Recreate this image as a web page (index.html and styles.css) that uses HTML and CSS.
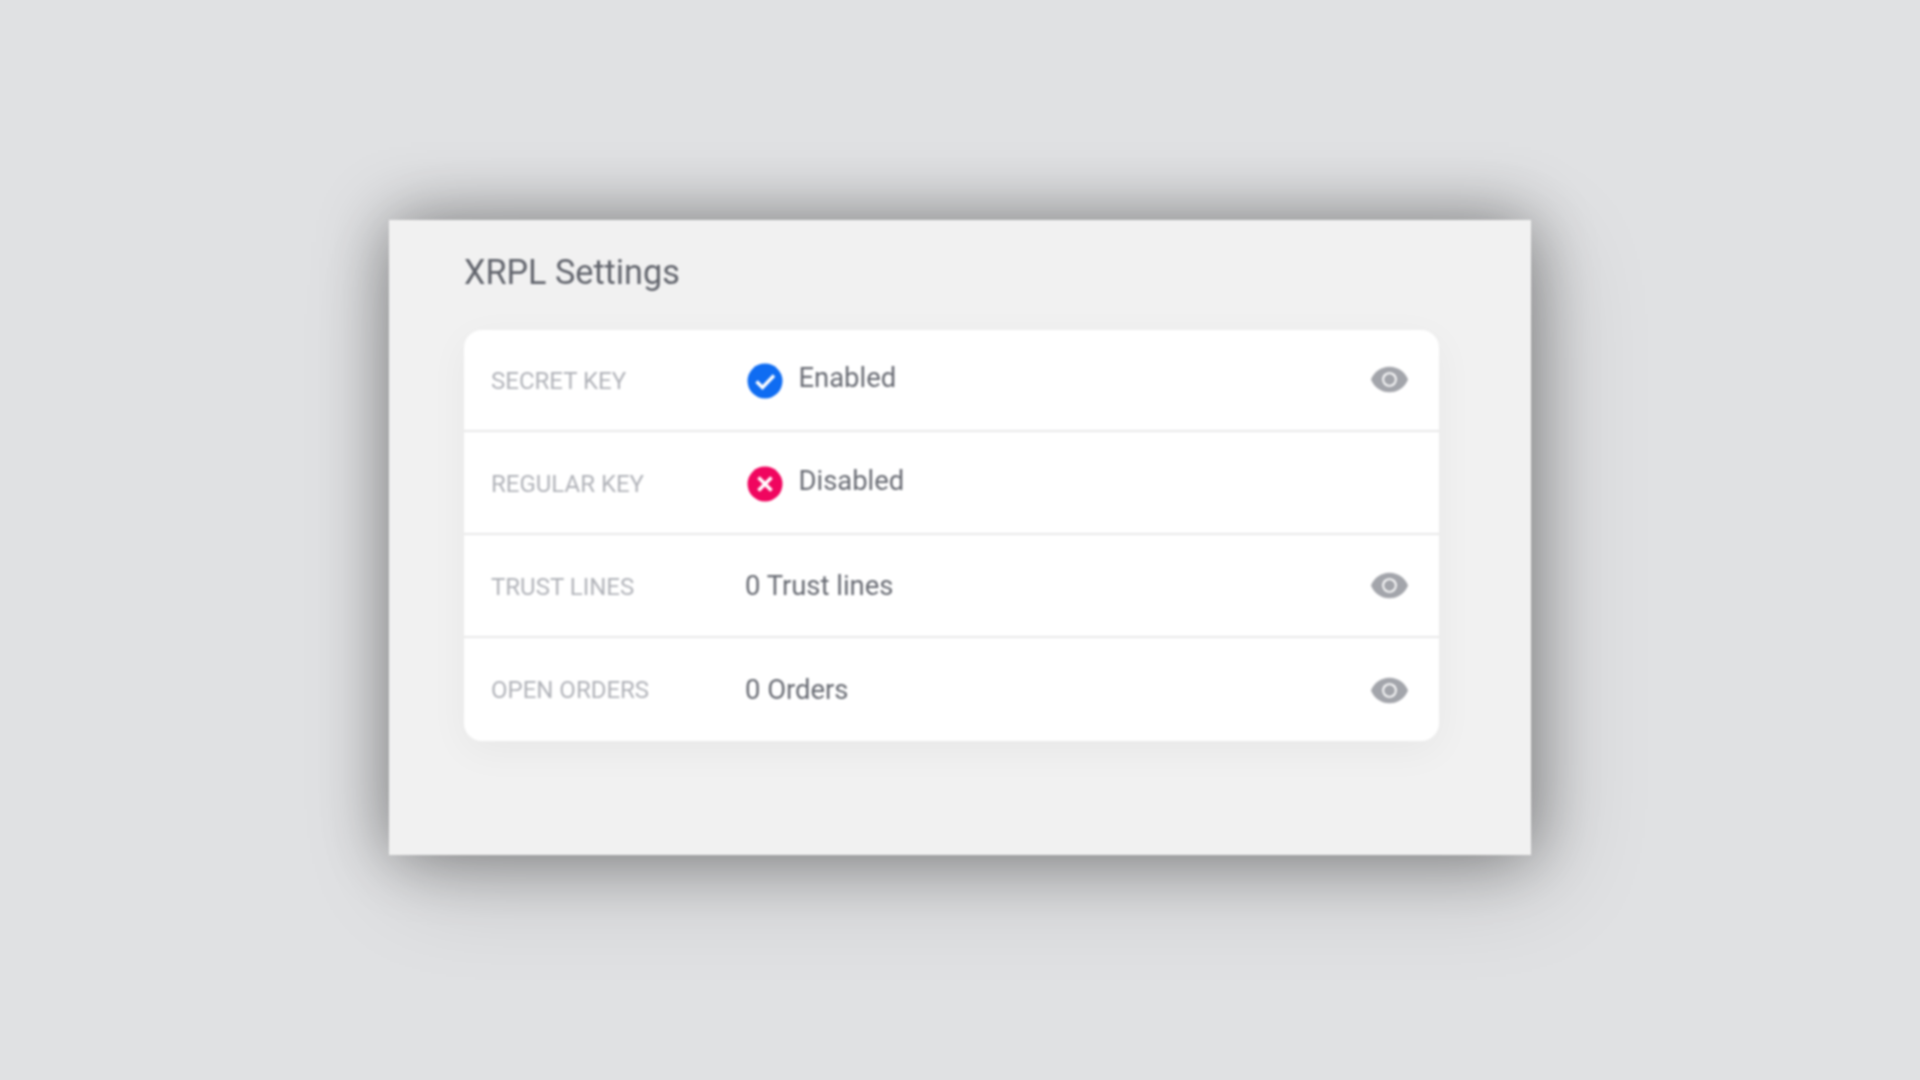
FILE: index.html
```html
<!DOCTYPE html>
<html lang="en">
<head>
<meta charset="utf-8">
<title>XRPL Settings</title>
<link rel="stylesheet" href="styles.css">
</head>
<body>
<section class="modal">
  <h1 class="title">XRPL Settings</h1>
  <div class="card">
    <div class="row">
      <span class="label">SECRET KEY</span>
      <span class="value status">
        <svg class="badge" viewBox="0 0 36 36"><circle cx="18" cy="18" r="17.5" fill="#0f6cf2"/><path d="M9.5 18.5l6 6L27 12.5" fill="none" stroke="#fff" stroke-width="3.4"/></svg>
        <span class="status-text">Enabled</span>
      </span>
      <svg class="eye" viewBox="0 0 24 24"><path d="M12 4.5C7 4.5 2.73 7.61 1 12c1.73 4.39 6 7.5 11 7.5s9.27-3.11 11-7.5c-1.73-4.39-6-7.5-11-7.5z"/><circle class="eye-ring" cx="12" cy="12" r="4.5"/><circle cx="12" cy="12" r="3"/></svg>
    </div>
    <div class="row">
      <span class="label">REGULAR KEY</span>
      <span class="value status">
        <svg class="badge" viewBox="0 0 36 36"><circle cx="18" cy="18" r="17.5" fill="#f0065f"/><path d="M11.5 11.5l13 13M24.5 11.5l-13 13" fill="none" stroke="#fff" stroke-width="3.6"/></svg>
        <span class="status-text">Disabled</span>
      </span>
    </div>
    <div class="row">
      <span class="label">TRUST LINES</span>
      <span class="value">0 Trust lines</span>
      <svg class="eye" viewBox="0 0 24 24"><path d="M12 4.5C7 4.5 2.73 7.61 1 12c1.73 4.39 6 7.5 11 7.5s9.27-3.11 11-7.5c-1.73-4.39-6-7.5-11-7.5z"/><circle class="eye-ring" cx="12" cy="12" r="4.5"/><circle cx="12" cy="12" r="3"/></svg>
    </div>
    <div class="row">
      <span class="label">OPEN ORDERS</span>
      <span class="value">0 Orders</span>
      <svg class="eye eye-low" viewBox="0 0 24 24"><path d="M12 4.5C7 4.5 2.73 7.61 1 12c1.73 4.39 6 7.5 11 7.5s9.27-3.11 11-7.5c-1.73-4.39-6-7.5-11-7.5z"/><circle class="eye-ring" cx="12" cy="12" r="4.5"/><circle cx="12" cy="12" r="3"/></svg>
    </div>
  </div>
</section>
</body>
</html>
```
FILE: styles.css
```css
* { box-sizing: border-box; }
html, body { height: 100%; }
body {
  margin: 0;
  height: 1080px;
  overflow: hidden;
  background: #e0e1e3;
  font-family: Roboto, "Liberation Sans", sans-serif;
  display: flex;
  align-items: flex-start;
  padding: 220px 0 0 389px;
}
.modal {
  width: 1142px;
  height: 635px;
  background: #f1f1f1;
  padding: 33px 92px 0 75px;
  box-shadow: 0 0 64px rgba(0,0,0,.42), 16px 24px 100px rgba(0,0,0,.16);
  filter: blur(.8px);
}
.title {
  margin: 0 0 39px;
  font-size: 34.2px;
  line-height: 38px;
  font-weight: 400;
  color: #62656d;
}
.card {
  width: 975px;
  height: 411px;
  background: #fff;
  border-radius: 18px;
  box-shadow: 0 10px 40px rgba(0,0,0,.045);
  overflow: hidden;
}
.row {
  height: 103px;
  display: flex;
  align-items: center;
  padding: 2px 30px 0 27px;
  border-bottom: 2px solid #e8e8e9;
}
.row:first-child { height: 102px; }
.row:last-child { border-bottom: 0; padding-top: 1px; }
.label {
  width: 254px;
  font-size: 24px;
  color: #b1b3b9;
}
.value {
  font-size: 27.4px;
  color: #686b73;
  padding-bottom: 1px;
}
.status { display: flex; align-items: flex-start; padding-bottom: 0; }
.badge { width: 36px; height: 36px; margin: 0 15.5px 0 2px; }
.status-text { margin-top: -3px; line-height: 36px; }
.eye { width: 39px; height: 39px; fill: #a3a5ab; stroke: #a3a5ab; stroke-width: .7; margin-left: auto; margin-top: -3px; }
.eye .eye-ring { fill: #fff; stroke: none; }
.eye-low { margin-top: 0; }
```
